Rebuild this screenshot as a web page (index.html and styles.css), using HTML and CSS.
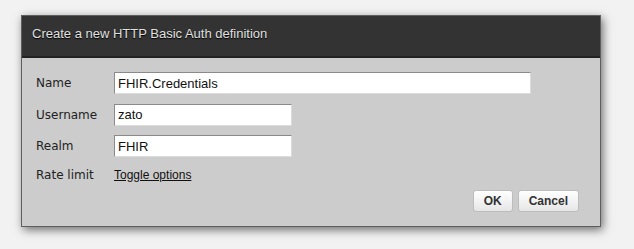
FILE: index.html
```html
<!DOCTYPE html>
<html>
<head>
<meta charset="utf-8">
<link rel="stylesheet" href="styles.css">
</head>
<body>
<div class="dialog">
  <div class="dialog-title">Create a new HTTP Basic Auth definition</div>
  <div class="dialog-body">
    <div class="form">
      <label class="label">Name</label>
      <div class="field"><input class="input input-wide" type="text" value="FHIR.Credentials"></div>
      <label class="label">Username</label>
      <div class="field"><input class="input" type="text" value="zato"></div>
      <label class="label">Realm</label>
      <div class="field"><input class="input" type="text" value="FHIR"></div>
      <label class="label label-text">Rate limit</label>
      <div class="field field-text"><a class="toggle" href="#">Toggle options</a></div>
    </div>
    <div class="actions">
      <button class="btn" type="button">OK</button>
      <button class="btn" type="button">Cancel</button>
    </div>
  </div>
</div>
</body>
</html>
```
FILE: styles.css
```css
html, body {
  margin: 0;
  padding: 0;
}
body {
  background: #f2f2f2;
  width: 634px;
  height: 249px;
  overflow: hidden;
  padding: 15px 0 0 21px;
  box-sizing: border-box;
}
.dialog {
  width: 580px;
  box-sizing: border-box;
  border: 1px solid #5e5e5e;
  background: #cccccc;
  box-shadow: 2px 3px 9px rgba(0, 0, 0, 0.55);
}
.dialog-title {
  background: #333333;
  border-bottom: 2px solid #222222;
  height: 42px;
  box-sizing: border-box;
  padding: 0 10px;
  line-height: 36px;
  font-family: "Liberation Sans", Arial, sans-serif;
  font-size: 13px;
  color: #e0e0e0;
  text-shadow: 0 1px 1px #000;
}
.dialog-body {
  padding: 14px 21px 14px 14px;
}
.form {
  display: grid;
  grid-template-columns: 78px 1fr;
  row-gap: 9.5px;
  align-items: center;
}
.label {
  font-family: "DejaVu Sans", Verdana, sans-serif;
  font-size: 12px;
  color: #222;
  line-height: 22px;
}
.label-text {
  line-height: 16px;
}
.field {
  height: 22px;
  display: flex;
  align-items: center;
}
.field-text {
  height: 16px;
}
.input {
  box-sizing: border-box;
  height: 22px;
  width: 178px;
  margin: 0;
  padding: 0 3px;
  border: 1px solid;
  border-color: #8a8a8a #dcdcdc #dcdcdc #8a8a8a;
  background: #fff;
  font-family: "Liberation Sans", Arial, sans-serif;
  font-size: 13px;
  color: #111;
  outline: none;
}
.input-wide {
  width: 417px;
}
.toggle {
  font-family: "Liberation Sans", Arial, sans-serif;
  font-size: 12px;
  color: #111;
  text-decoration: underline;
}
.actions {
  display: flex;
  justify-content: flex-end;
  gap: 5px;
  margin-top: 7.5px;
}
.btn {
  height: 22px;
  box-sizing: border-box;
  padding: 0 10px;
  margin: 0;
  border: 1px solid #bdbdbd;
  border-radius: 3px;
  background: linear-gradient(#ffffff, #e6e6e6);
  font-family: "Liberation Sans", Arial, sans-serif;
  font-weight: bold;
  font-size: 12px;
  color: #333;
  line-height: 20px;
}
```
